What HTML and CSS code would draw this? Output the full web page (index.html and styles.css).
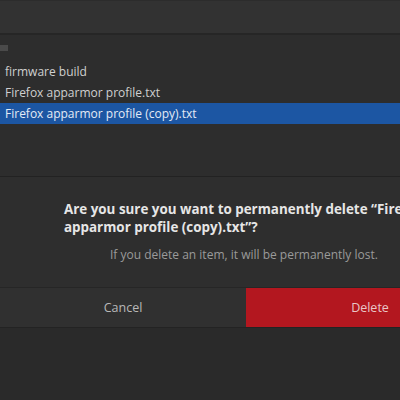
FILE: index.html
```html
<!DOCTYPE html>
<html lang="en">
<head>
    <meta charset="UTF-8">
    <title>Delete file</title>
    <link rel="stylesheet" href="styles.css">
</head>
<body>
    <div id="window">
        <!-- Path bar -->
        <div class="path-bar"></div>

        <!-- File list -->
        <div class="file-list">
            <div class="list-mark"></div>
            <div class="file-row">firmware build</div>
            <div class="file-row">Firefox apparmor profile.txt</div>
            <div class="file-row selected">Firefox apparmor profile (copy).txt</div>
        </div>

        <!-- Confirm dialog -->
        <div class="dialog">
            <div class="dialog-body">
                <div class="dialog-title">Are you sure you want to permanently delete “Firefox apparmor profile (copy).txt”?</div>
                <div class="dialog-text">If you delete an item, it will be permanently lost.</div>
            </div>
            <div class="dialog-buttons">
                <button class="btn-cancel">Cancel</button>
                <button class="btn-delete">Delete</button>
            </div>
        </div>
    </div>
</body>
</html>
```

FILE: styles.css
```css
body {
    margin: 0;
    padding: 0;
    background: #2a2a2a;
    font-family: 'Open Sans', 'Noto Sans', sans-serif;
    overflow: hidden;
}

#window {
    width: 400px;
    height: 400px;
    display: flex;
    flex-direction: column;
    overflow: hidden;
}

.path-bar {
    height: 32px;
    background: #323232;
    border-top: 1px solid #2c2c2c;
    border-bottom: 2px solid #262626;
}

.file-list {
    background: #2d2d2d;
    padding-top: 10px;
    height: 141px;
    box-sizing: border-box;
}

.list-mark {
    width: 8px;
    height: 6px;
    background: #4a4a4a;
    margin-bottom: 10px;
}

.file-row {
    height: 21px;
    line-height: 21px;
    padding-left: 5px;
    font-size: 12px;
    color: #d0d0d0;
    white-space: nowrap;
}

.file-row.selected {
    background: #1c56a3;
    color: #e4ebf6;
}

.dialog {
    width: 494px;
    background: #2e2e2e;
    border-top: 1px solid #222;
    flex-shrink: 0;
}

.dialog-body {
    padding: 23px 0 24px 64px;
}

.dialog-title {
    font-weight: bold;
    font-size: 13.4px;
    line-height: 18px;
    color: #e6e6e6;
    width: 420px;
}

.dialog-text {
    margin: 10px 0 0 46px;
    font-size: 12px;
    color: #9a9a9a;
}

.dialog-buttons {
    display: grid;
    grid-template-columns: 246px 248px;
    height: 39px;
    border-top: 1px solid #262626;
    border-bottom: 1px solid #232323;
}

.dialog-buttons button {
    border: none;
    font-family: inherit;
    font-size: 12.5px;
    cursor: pointer;
}

.btn-cancel {
    background: #303030;
    color: #b8b8b8;
}

.btn-delete {
    background: #b3171f;
    color: #e9c6c8;
}
```
